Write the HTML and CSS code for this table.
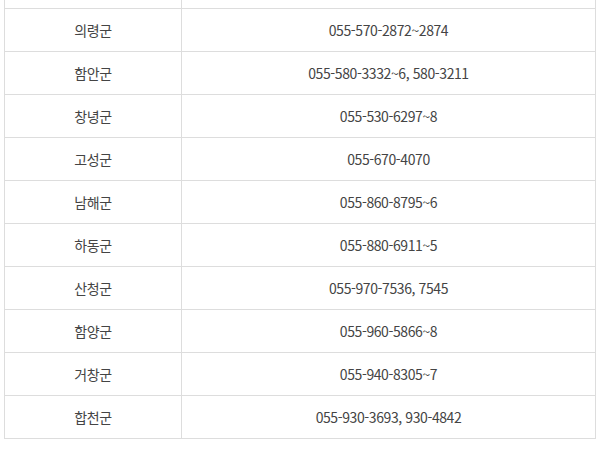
FILE: index.html
```html
<!DOCTYPE html>
<html lang="ko">
<head>
<meta charset="utf-8">
<link rel="stylesheet" href="styles.css">
</head>
<body>
<div class="table">
  <div class="row stub"><div class="cell name"></div><div class="cell tel"></div></div>
  <div class="row"><div class="cell name">의령군</div><div class="cell tel">055-570-2872~2874</div></div>
  <div class="row"><div class="cell name">함안군</div><div class="cell tel">055-580-3332~6, 580-3211</div></div>
  <div class="row"><div class="cell name">창녕군</div><div class="cell tel">055-530-6297~8</div></div>
  <div class="row"><div class="cell name">고성군</div><div class="cell tel">055-670-4070</div></div>
  <div class="row"><div class="cell name">남해군</div><div class="cell tel">055-860-8795~6</div></div>
  <div class="row"><div class="cell name">하동군</div><div class="cell tel">055-880-6911~5</div></div>
  <div class="row"><div class="cell name">산청군</div><div class="cell tel">055-970-7536, 7545</div></div>
  <div class="row"><div class="cell name">함양군</div><div class="cell tel">055-960-5866~8</div></div>
  <div class="row"><div class="cell name">거창군</div><div class="cell tel">055-940-8305~7</div></div>
  <div class="row"><div class="cell name">합천군</div><div class="cell tel">055-930-3693, 930-4842</div></div>
</div>
</body>
</html>
```
FILE: styles.css
```css
html, body {
  margin: 0;
  padding: 0;
  background: #fff;
}
body {
  font-family: "Noto Sans CJK KR", "Noto Sans", sans-serif;
  font-size: 14px;
  letter-spacing: -0.4px;
  color: #444;
}
.table {
  margin-left: 4px;
  width: 592px;
  box-sizing: border-box;
  border-left: 1px solid #ddd;
  border-right: 1px solid #ddd;
}
.row {
  display: grid;
  grid-template-columns: 177px 1fr;
  height: 43px;
  box-sizing: border-box;
  border-bottom: 1px solid #ddd;
}
.row.stub {
  height: 9px;
}
.cell {
  display: flex;
  align-items: center;
  justify-content: center;
  line-height: 20px;
}
.name {
  border-right: 1px solid #ddd;
}
```
